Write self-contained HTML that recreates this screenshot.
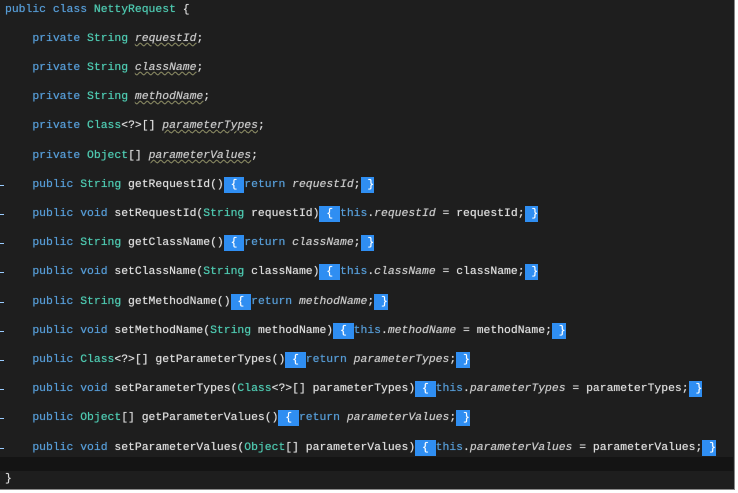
<!DOCTYPE html><html><head><style>
body{margin:0;width:738px;height:493px;background:#fff;overflow:hidden}
#ed{position:absolute;left:0;top:0;width:735px;height:490px;background:#1e1e1e;border-right:1px solid #888;border-bottom:1px solid #888;box-sizing:border-box}
.l{position:absolute;left:5px;white-space:pre;font-family:"Liberation Mono",monospace;font-size:11.4px;color:#dcdcdc;line-height:14px;text-shadow:0 0 0.6px currentColor}
.k{color:#569cd6}.t{color:#4ec9b0}.f{font-style:italic;color:#c8c8c8}
.u{text-decoration:underline wavy #7a7a50;text-decoration-thickness:1px}
.b{background:#2f8ef2;color:#fff;padding:2px 0}
.m{position:absolute;left:0;width:4px;height:1px;background:#9cf}
#cur{position:absolute;left:0;top:457px;width:733px;height:14px;background:#141414}
</style></head><body><div id="ed">
<div id="cur"></div>
<div class="l" style="top:3px"><span class="k">public class</span> <span class="t">NettyRequest</span> {</div>
<div class="l" style="top:32px">    <span class="k">private</span> <span class="t">String</span> <span class="f u">requestId</span>;</div>
<div class="l" style="top:61px">    <span class="k">private</span> <span class="t">String</span> <span class="f u">className</span>;</div>
<div class="l" style="top:90px">    <span class="k">private</span> <span class="t">String</span> <span class="f u">methodName</span>;</div>
<div class="l" style="top:119px">    <span class="k">private</span> <span class="t">Class</span>&lt;?&gt;[] <span class="f u">parameterTypes</span>;</div>
<div class="l" style="top:149px">    <span class="k">private</span> <span class="t">Object</span>[] <span class="f u">parameterValues</span>;</div>
<div class="l" style="top:178px">    <span class="k">public</span> <span class="t">String</span> getRequestId()<span class="b"> { </span><span class="k">return</span> <span class="f">requestId</span>;<span class="b"> }</span></div>
<div class="l" style="top:207px">    <span class="k">public void</span> setRequestId(<span class="t">String</span> requestId)<span class="b"> { </span><span class="k">this</span>.<span class="f">requestId</span> = requestId;<span class="b"> }</span></div>
<div class="l" style="top:236px">    <span class="k">public</span> <span class="t">String</span> getClassName()<span class="b"> { </span><span class="k">return</span> <span class="f">className</span>;<span class="b"> }</span></div>
<div class="l" style="top:265px">    <span class="k">public void</span> setClassName(<span class="t">String</span> className)<span class="b"> { </span><span class="k">this</span>.<span class="f">className</span> = className;<span class="b"> }</span></div>
<div class="l" style="top:295px">    <span class="k">public</span> <span class="t">String</span> getMethodName()<span class="b"> { </span><span class="k">return</span> <span class="f">methodName</span>;<span class="b"> }</span></div>
<div class="l" style="top:324px">    <span class="k">public void</span> setMethodName(<span class="t">String</span> methodName)<span class="b"> { </span><span class="k">this</span>.<span class="f">methodName</span> = methodName;<span class="b"> }</span></div>
<div class="l" style="top:353px">    <span class="k">public</span> <span class="t">Class</span>&lt;?&gt;[] getParameterTypes()<span class="b"> { </span><span class="k">return</span> <span class="f">parameterTypes</span>;<span class="b"> }</span></div>
<div class="l" style="top:382px">    <span class="k">public void</span> setParameterTypes(<span class="t">Class</span>&lt;?&gt;[] parameterTypes)<span class="b"> { </span><span class="k">this</span>.<span class="f">parameterTypes</span> = parameterTypes;<span class="b"> }</span></div>
<div class="l" style="top:411px">    <span class="k">public</span> <span class="t">Object</span>[] getParameterValues()<span class="b"> { </span><span class="k">return</span> <span class="f">parameterValues</span>;<span class="b"> }</span></div>
<div class="l" style="top:441px">    <span class="k">public void</span> setParameterValues(<span class="t">Object</span>[] parameterValues)<span class="b"> { </span><span class="k">this</span>.<span class="f">parameterValues</span> = parameterValues;<span class="b"> }</span></div>
<div class="l" style="top:472px">}</div>
<div class="m" style="top:185px"></div><div class="m" style="top:214px"></div><div class="m" style="top:243px"></div><div class="m" style="top:272px"></div><div class="m" style="top:302px"></div><div class="m" style="top:331px"></div><div class="m" style="top:360px"></div><div class="m" style="top:389px"></div><div class="m" style="top:418px"></div><div class="m" style="top:448px"></div>
</div></body></html>
